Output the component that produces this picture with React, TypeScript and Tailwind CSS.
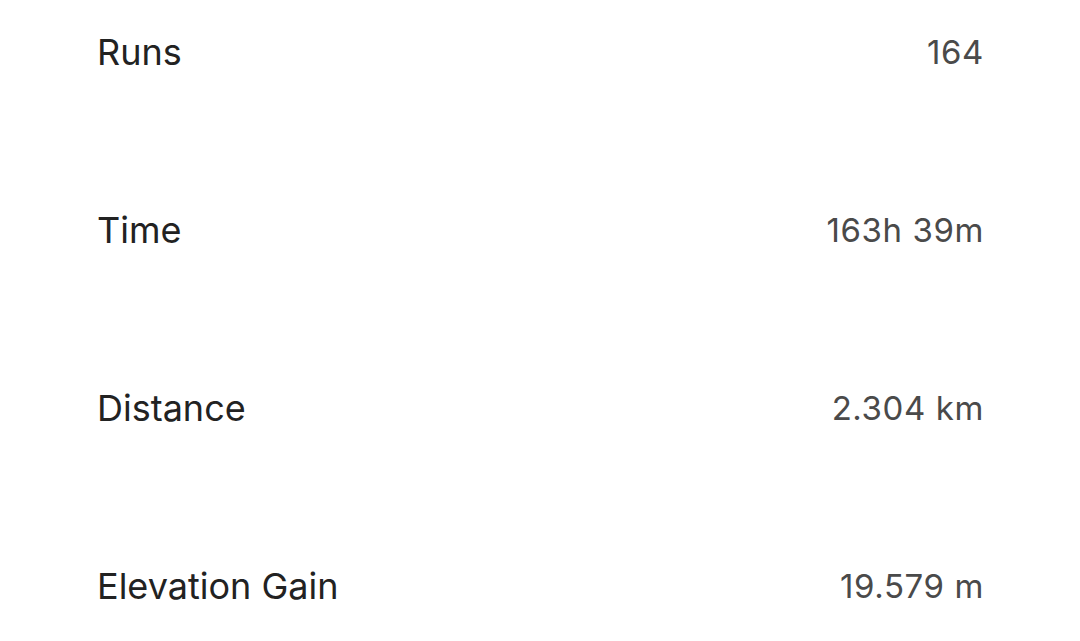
const stats = [
  { label: 'Runs', value: '164' },
  { label: 'Time', value: '163h 39m' },
  { label: 'Distance', value: '2.304 km' },
  { label: 'Elevation Gain', value: '19.579 m' },
];

export default function App() {
  return (
    <div
      className="min-h-[641px] w-full bg-white pl-[97px] pr-[96px] pt-[27px]"
      style={{ fontFamily: 'Inter, "Noto Sans", sans-serif' }}
    >
      <div className="flex flex-col gap-[128px]">
        {stats.map((s) => (
          <div key={s.label} className="flex h-[50px] items-center justify-between">
            <span className="text-[36px] leading-none text-[#222222]">{s.label}</span>
            <span className="text-[33px] leading-none tracking-[0.6px] text-[#4a4a4a]">{s.value}</span>
          </div>
        ))}
      </div>
    </div>
  );
}
